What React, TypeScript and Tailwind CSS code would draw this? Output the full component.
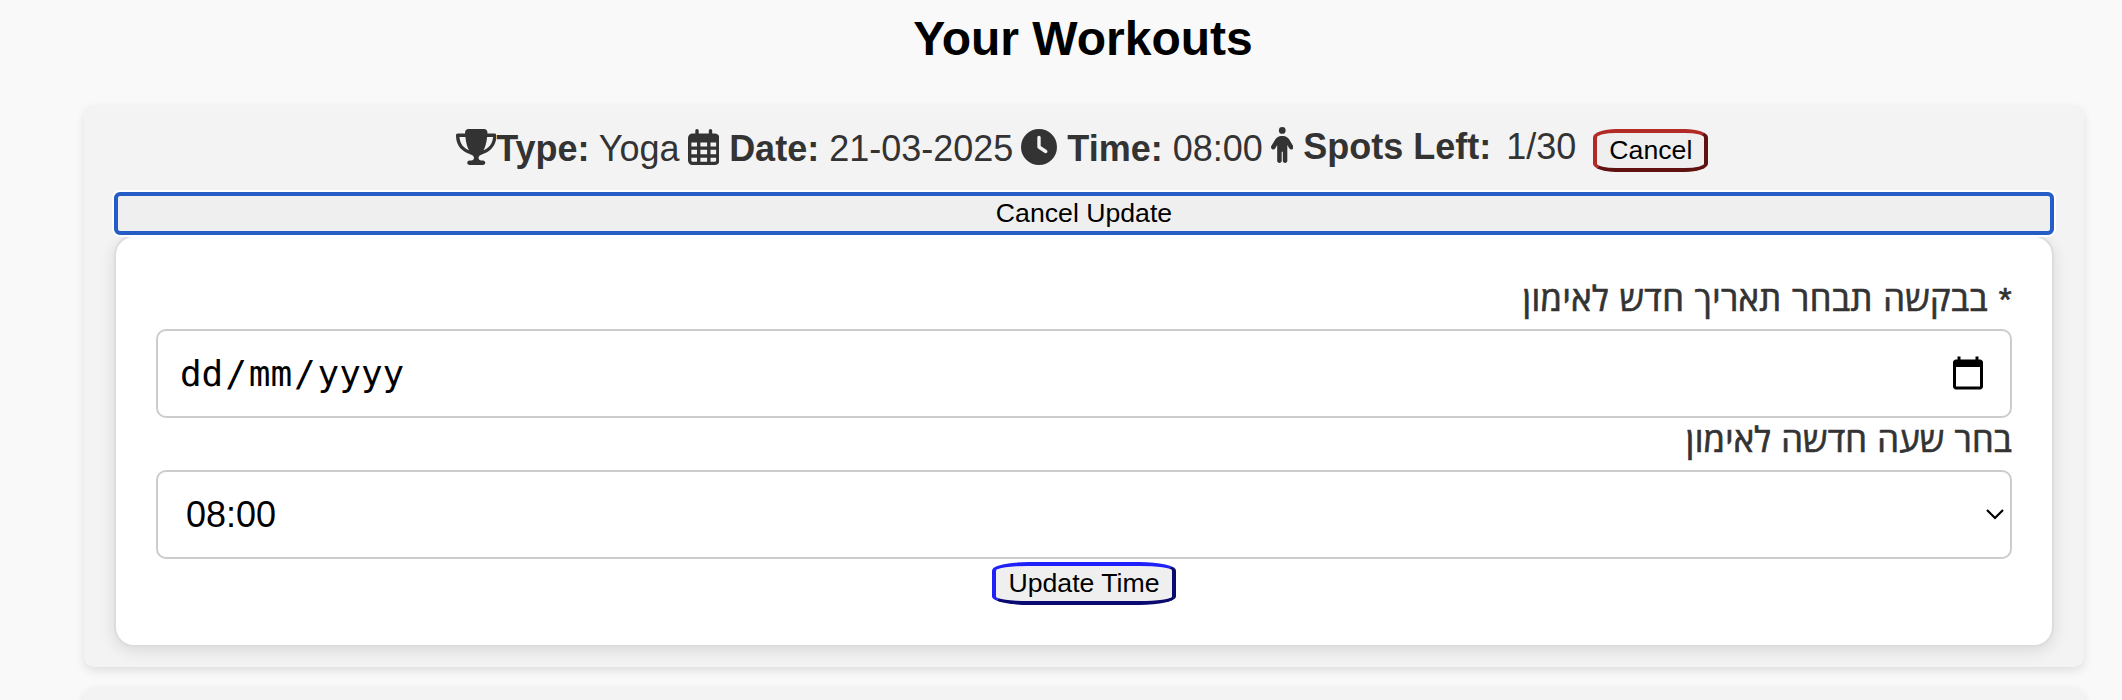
import React from "react";
import { FaTrophy, FaRegCalendarDays, FaClock, FaPerson } from "react-icons/fa6";

function Card({ children }: { children?: React.ReactNode }) {
  return (
    <section className="flex w-[2000px] flex-col rounded-[10px] bg-[#f3f3f3] px-[30px] pt-6 shadow-[0_4px_10px_rgba(0,0,0,0.1)]">
      {children}
    </section>
  );
}

function WorkoutSummary() {
  return (
    <div className="flex h-[63px] items-start justify-center whitespace-pre pr-[4px] text-[36px] leading-[36px] text-[#333]">
      <FaTrophy className="h-9 w-[40.5px]" />
      <p className="pt-0.5">
        <b>Type:</b> Yoga
      </p>
      <FaRegCalendarDays className="ml-2 h-9 w-[31.5px]" />
      <p className="ml-2.5 pt-0.5">
        <b>Date:</b> 21-03-2025
      </p>
      <FaClock className="ml-2 h-9 w-9" />
      <p className="ml-2.5 pt-0.5">
        <b>Time:</b> 08:00
      </p>
      <FaPerson className="-mt-0.5 ml-2 h-9 w-[22.5px]" />
      <p className="ml-2.5">
        <b>Spots Left:</b>
        <span className="ml-[15px]">1/30</span>
      </p>
      <button className="ml-[17px] flex h-[43px] w-[115px] items-center justify-center rounded-[20%] border-4 border-t-[#b22a25] border-r-[#5f1210] border-b-[#5f1210] border-l-[#b22a25] bg-[#efefef] text-[26.67px] leading-none text-black">
        Cancel
      </button>
    </div>
  );
}

function Label({ children }: { children: React.ReactNode }) {
  return (
    <label
      dir="rtl"
      className="h-[52px] shrink-0 self-stretch font-['Open_Sans','Liberation_Sans',sans-serif] text-[34.5px] leading-[42px] text-[#333] [-webkit-text-stroke:0.7px_#333] [word-spacing:1px]"
    >
      {children}
    </label>
  );
}

function UpdateForm() {
  return (
    <form className="flex h-[412px] flex-col items-center rounded-[20px] border-2 border-[#ddd] bg-white px-10 pt-10 shadow-[0_4px_16px_rgba(0,0,0,0.1)]">
      <Label>
        <span className="tracking-[0.45px]">
          <span className="font-['Liberation_Sans',sans-serif] text-[33px]">* </span>
          בבקשה תבחר תאריך חדש לאימון
        </span>
      </Label>
      <div className="flex h-[89px] w-full shrink-0 items-center justify-between rounded-[10px] border-2 border-[#ccc] pr-6 pl-5">
        <div className="flex font-['DejaVu_Sans_Mono',monospace] text-[36px] text-black">
          <span className="px-[1.9px]">dd</span>/<span className="px-[1.9px]">mm</span>/
          <span className="px-[1.9px]">yyyy</span>
        </div>
        <svg className="-mt-[2px] h-9 w-9" viewBox="0 0 24 24">
          <path d="M20 3h-1V1h-2v2H7V1H5v2H4c-1.1 0-2 .9-2 2v16c0 1.1.9 2 2 2h16c1.1 0 2-.9 2-2V5c0-1.1-.9-2-2-2zm0 18H4V8h16v13z" />
        </svg>
      </div>
      <Label>
        <span className="tracking-[0.2px]">בחר שעה חדשה לאימון</span>
      </Label>
      <div className="flex h-[89px] w-full shrink-0 items-center justify-between rounded-[10px] border-2 border-[#ccc] pr-[5px] pl-7">
        <span className="text-[36px] text-black">08:00</span>
        <svg className="-mt-px h-[12px] w-[20px]" viewBox="0 0 20 12" fill="none" stroke="black" strokeWidth="2.2">
          <path d="M2 2l8 8 8-8" />
        </svg>
      </div>
      <button className="mt-[3px] flex h-[43px] w-[184px] shrink-0 items-center justify-center rounded-[20%] border-4 border-t-[#2020fa] border-r-[#0a0a70] border-b-[#0a0a70] border-l-[#2020fa] bg-[#efefef] text-[26.67px] leading-none text-black">
        Update Time
      </button>
    </form>
  );
}

export default function App() {
  return (
    <main className="flex h-[700px] flex-col overflow-hidden bg-[#f9f9f9] pl-[84px] font-['Liberation_Sans',sans-serif]">
      <h1 className="h-[105px] w-[1998px] shrink-0 pt-[11px] text-center text-[48px] leading-[56px] font-bold text-black">
        Your Workouts
      </h1>
      <div className="flex flex-col gap-5">
        <div className="flex h-[562px]">
          <Card>
            <WorkoutSummary />
            <button className="z-10 h-[43px] shrink-0 rounded-[6px] border-4 border-[#265cc5] bg-[#efefef] text-[26.67px] leading-none text-black shadow-[0_0_0_2px_white]">
              Cancel Update
            </button>
            <UpdateForm />
          </Card>
        </div>
        <div className="flex h-[562px]">
          <Card />
        </div>
      </div>
    </main>
  );
}
